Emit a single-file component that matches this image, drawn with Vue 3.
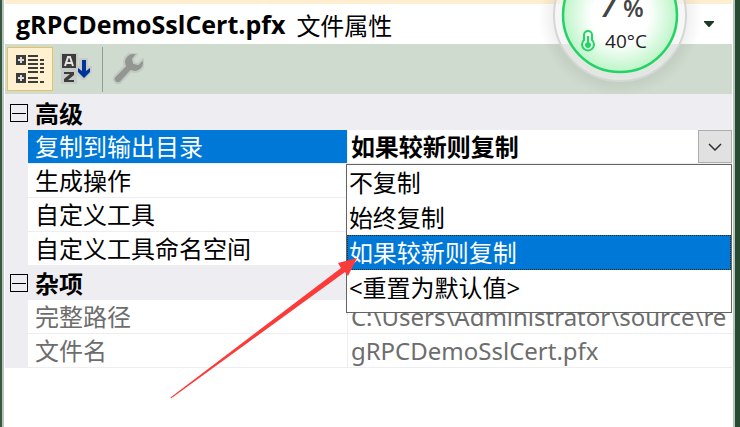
<script setup>
import { ref } from 'vue'

const fileName = 'gRPCDemoSslCert.pfx'
const copyMode = ref('如果较新则复制')
const copyModes = ['不复制', '始终复制', '如果较新则复制', '<重置为默认值>']

const groups = ref([
  {
    title: '高级',
    open: true,
    readonly: false,
    items: [
      { name: '复制到输出目录', editor: true },
      { name: '生成操作', value: '' },
      { name: '自定义工具', value: '' },
      { name: '自定义工具命名空间', value: '' },
    ],
  },
  {
    title: '杂项',
    open: true,
    readonly: true,
    items: [
      { name: '完整路径', value: 'C:\\Users\\Administrator\\source\\re' },
      { name: '文件名', value: fileName },
    ],
  },
])
</script>

<template>
  <div class="window">
    <section class="panel">
      <!-- Title -->
      <header class="title-bar">
        <h1>{{ fileName }}</h1>
        <span class="kind">文件属性</span>
        <button class="title-menu" aria-label="选择对象">
          <svg width="10" height="6" viewBox="0 0 10 6"><path d="M0 0H10V1L5.500 6H4.500L0 1Z" fill="#1e3a2a" /></svg>
        </button>
      </header>

      <!-- Toolbar -->
      <div class="toolbar">
        <button class="tool active" aria-label="按分类顺序">
          <svg width="28" height="28" viewBox="0 0 28 28" fill="#3c3c3c">
            <path d="M0 0h10v10H0zM0 18h10v10H0z" />
            <path d="M2 4h2V2h2v2h2v2H6v2H4V6H2zM2 22h2v-2h2v2h2v2H6v2H4v-2H2z" fill="#dddcdc" />
            <path d="M12 0h10v2H12zM12 4h10v2H12zM12 8h10v2H12zM12 12h10v2H12zM12 16h10v2H12zM12 22h10v2H12zM12 26h10v2H12z" />
            <path d="M24 4h4v2h-4zM24 8h4v2h-4zM24 12h4v2h-4zM24 16h4v2h-4zM24 26h4v2h-4z" />
          </svg>
        </button>
        <button class="tool" aria-label="字母顺序">
          <svg width="32" height="32" viewBox="0 1 32 32">
            <path d="M0 0h18v13h1V6h9v8h4v6l-7 8h-3l-5-5v9H1V18H0z" fill="#c6cbc8" />
            <path d="M2 2h14v14H2z" fill="#3c3c3c" />
            <path d="M5 14L8 5h2l3 9M6 11h6" fill="none" stroke="#e4e5e4" stroke-width="2" />
            <path d="M4 20h10v3l-6 5h6v2H4v-3l6-5H4z" fill="#3c3c3c" />
            <path d="M22 8h4v11l4-3v4l-6 6-6-6v-4l4 3z" fill="#003399" />
          </svg>
        </button>
        <span class="divider"></span>
        <button class="tool" aria-label="属性页" disabled>
          <svg width="32" height="32" viewBox="0 0 32 32">
            <path
              d="M25 1A9 9 0 0 0 13 13L3 23A4 4 0 0 0 9 29L19 18A9 9 0 0 0 31 6L26 11L22 10L21 6Z"
              fill="#929792"
              stroke="#c2c9c3"
              stroke-width="2"
              stroke-linejoin="round"
            />
          </svg>
        </button>
      </div>

      <!-- Properties -->
      <table class="grid">
        <colgroup>
          <col class="col-gutter" />
          <col class="col-name" />
          <col />
        </colgroup>
        <tbody v-for="group in groups" :key="group.title" :class="{ readonly: group.readonly }">
          <tr class="category">
            <td>
              <button
                class="toggle"
                :aria-expanded="group.open"
                :aria-label="group.title"
                @click="group.open = !group.open"
              ></button>
            </td>
            <th colspan="2" scope="rowgroup">{{ group.title }}</th>
          </tr>
          <template v-if="group.open">
            <tr v-for="item in group.items" :key="item.name" :class="{ selected: item.editor }">
              <td class="gutter"></td>
              <th class="name" scope="row">
                <label v-if="item.editor" for="copy-mode">{{ item.name }}</label>
                <template v-else>{{ item.name }}</template>
              </th>
              <td class="value">
                <div v-if="item.editor" class="combo">
                  <select id="copy-mode" v-model="copyMode">
                    <option v-for="mode in copyModes" :key="mode">{{ mode }}</option>
                  </select>
                  <span class="chevron">
                    <svg width="14" height="8" viewBox="0 0 14 8">
                      <path d="M1 1L7 7L13 1" fill="none" stroke="#303030" stroke-width="1.500" />
                    </svg>
                  </span>
                  <ul class="options" role="listbox" aria-label="复制到输出目录">
                    <li
                      v-for="mode in copyModes"
                      :key="mode"
                      role="option"
                      :aria-selected="mode === copyMode"
                      :class="{ current: mode === copyMode }"
                      @click="copyMode = mode"
                    >
                      {{ mode }}
                    </li>
                  </ul>
                </div>
                <span v-else class="text">{{ item.value }}</span>
              </td>
            </tr>
          </template>
        </tbody>
      </table>
    </section>

    <!-- Temperature widget -->
    <div class="gauge">
      <svg class="gauge-face" width="180" height="180" viewBox="0 0 180 180">
        <defs>
          <radialGradient id="shade">
            <stop offset="0.750" stop-color="#000" stop-opacity="0.080" />
            <stop offset="1" stop-color="#000" stop-opacity="0" />
          </radialGradient>
          <radialGradient id="glow">
            <stop offset="0.500" stop-color="#fff" />
            <stop offset="1" stop-color="#bdf5c8" />
          </radialGradient>
        </defs>
        <circle cx="90" cy="90" r="82" fill="url(#shade)" />
        <circle cx="90" cy="90" r="66" fill="#fff" fill-opacity="0.550" stroke="#d3d8d4" stroke-width="2" />
        <circle cx="90" cy="90" r="57" fill="url(#glow)" stroke="#24d366" stroke-width="2.500" />
      </svg>
      <div class="gauge-text">
        <div class="load"><span>7</span><small>%</small></div>
        <div class="temp">
          <svg width="14" height="22" viewBox="0 0 14 22" fill="none" stroke="#24d366">
            <path d="M3 10V5a4 4 0 0 1 8 0v5a6 6 0 1 1-8 0z" stroke-width="2" />
            <path d="M7 6v9" stroke-width="2" />
            <circle cx="7" cy="15" r="2.500" fill="#24d366" />
          </svg>
          <span>40°C</span>
        </div>
      </div>
    </div>

    <!-- Pointer arrow -->
    <svg class="arrow" width="190" height="144" viewBox="0 0 190 144">
      <path d="M2.500 140.500L173 11L170 6L189 1L180 19L177 15L3 141.500Z" fill="#fb3b3a" />
    </svg>
  </div>
</template>

<style>
body {
  margin: 0;
  background: #fff;
}
</style>

<style scoped>
.window {
  position: relative;
  box-sizing: border-box;
  min-height: 100vh;
  overflow: hidden;
  border-left: 2px solid #365740;
  border-right: 5px solid #294a32;
  font-family: 'Open Sans', 'Noto Sans CJK SC', sans-serif;
  font-size: 24px;
  color: #000;
}

.panel {
  box-sizing: border-box;
  min-height: 100vh;
  padding: 0 1px;
  border-left: 2px solid #b9c5bc;
  border-right: 2px solid #b4c5b9;
  background: #fff;
}

button {
  padding: 0;
  border: 0;
  background: none;
}

.title-bar {
  display: flex;
  align-items: center;
  gap: 11px;
  height: 40px;
  padding: 0 18px 0 11px;
  border-top: 4px solid #ffefd0;
}

.title-bar h1 {
  margin: 0;
  font-size: 25px;
  font-weight: 700;
}

.title-menu {
  display: flex;
  margin-left: auto;
}

.toolbar {
  display: flex;
  align-items: center;
  box-sizing: border-box;
  height: 50px;
  padding: 0 2px;
  background: #cedbce;
}

.tool {
  display: flex;
  align-items: center;
  justify-content: center;
  box-sizing: border-box;
  width: 46px;
  height: 44px;
}

.tool.active {
  border: 1px solid #e5c365;
  background: #fff0d0;
}

.divider {
  width: 1px;
  height: 45px;
  margin: 0 2px 0 3px;
  background: #8ea294;
}

.grid {
  width: 100%;
  table-layout: fixed;
  border-collapse: separate;
  border-spacing: 0;
  border-top: 2px solid #eeedf2;
  line-height: 33px;
}

.col-gutter {
  width: 23px;
}

.col-name {
  width: 44%;
}

.grid td,
.grid th {
  height: 33px;
  padding: 0;
  text-align: left;
  font-weight: 400;
  white-space: nowrap;
}

.category td,
.category th {
  height: 34px;
  background: #eeedf2;
}

.category th {
  padding-left: 7px;
  font-weight: 700;
}

.toggle {
  display: block;
  position: relative;
  box-sizing: border-box;
  width: 18px;
  height: 18px;
  margin-left: 5px;
  border: 1px solid #000;
}

.toggle::before {
  content: '';
  position: absolute;
  top: 8px;
  left: 1px;
  right: 1px;
  height: 1px;
  background: #000;
}

.grid .gutter {
  background: #eeedf2;
}

.grid .name,
.grid .value {
  border-bottom: 1px solid #eeedf2;
}

.grid .name {
  padding-left: 7px;
  border-right: 1px solid #eeedf2;
}

.selected .name {
  background: #0078d7;
  background-clip: padding-box;
  color: #fff;
}

.selected .name label {
  display: block;
}

.readonly .name,
.readonly .value {
  color: #6d6d6d;
}

.text {
  display: block;
  height: 33px;
  padding-left: 3px;
  overflow: hidden;
  font-family: 'Noto Sans', 'Noto Sans CJK SC', sans-serif;
}

.combo {
  display: flex;
  position: relative;
  height: 33px;
}

.combo select {
  flex: 1;
  min-width: 0;
  padding: 0 0 0 3px;
  border: 0;
  background: #fff;
  appearance: none;
  font: inherit;
  font-weight: 700;
  color: #000;
}

.chevron {
  display: flex;
  align-items: center;
  justify-content: center;
  box-sizing: border-box;
  width: 34px;
  border: 1px solid #adadad;
  background: #e1e1e1;
}

.options {
  position: absolute;
  z-index: 1;
  top: 34px;
  left: -2px;
  right: 0;
  margin: 0;
  padding: 0 0 7px;
  border: 1px solid #646464;
  background: #fff;
  list-style: none;
}

.options li {
  padding-left: 2px;
  line-height: 35px;
}

.options .current {
  background: #0078d7;
  color: #fff;
  outline: 1px dotted #3a2410;
  outline-offset: -1px;
}

.gauge {
  position: absolute;
  top: -75px;
  right: 25px;
  width: 180px;
  height: 180px;
}

.gauge-face {
  display: block;
}

.gauge-text {
  position: absolute;
  inset: 64px 0 0;
  display: flex;
  flex-direction: column;
  align-items: center;
  color: #444;
}

.load {
  display: flex;
  align-items: baseline;
  gap: 6px;
  padding-left: 4px;
  font-size: 30px;
  font-style: italic;
  font-weight: 600;
  line-height: 34px;
}

.load small {
  font-size: 24px;
  font-style: normal;
}

.temp {
  display: flex;
  align-items: center;
  gap: 10px;
  padding-right: 12px;
  color: #222;
  font-size: 19px;
  line-height: 32px;
}

.arrow {
  position: absolute;
  top: 257px;
  left: 166px;
  z-index: 2;
  pointer-events: none;
}
</style>
